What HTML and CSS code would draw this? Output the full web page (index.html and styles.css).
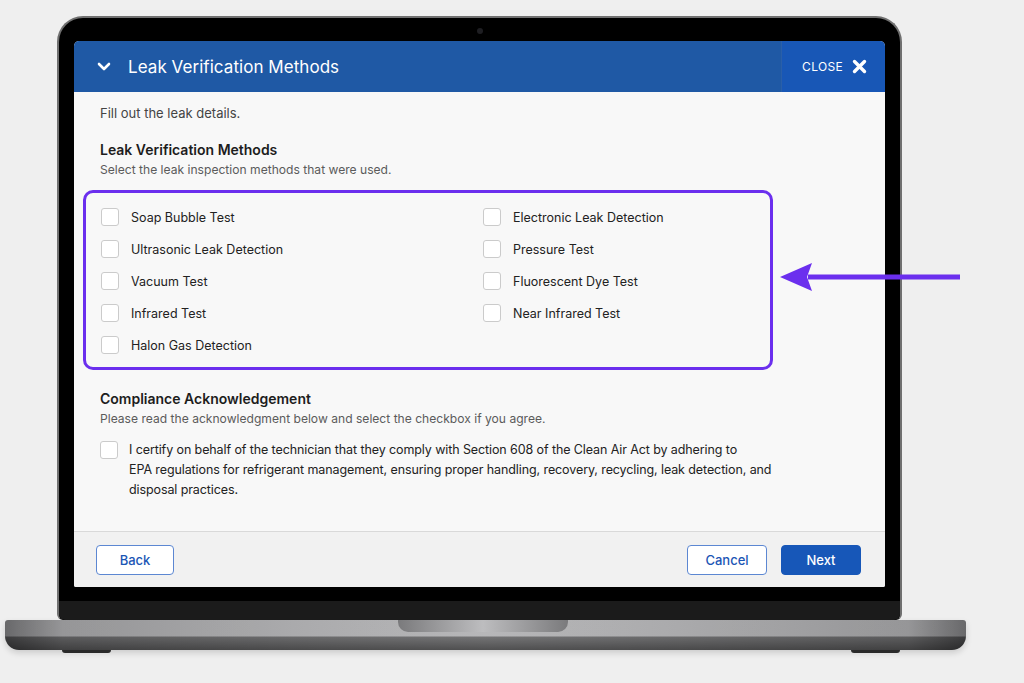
FILE: index.html
```html
<!DOCTYPE html>
<html lang="en">
<head>
  <meta charset="UTF-8">
  <meta name="viewport" content="width=device-width, initial-scale=1.0">
  <title>Leak Verification Methods</title>
  <link rel="stylesheet" href="styles.css">
</head>
<body>

  <div class="scene">
    <div class="laptop">
      <!-- Lid with screen -->
      <div class="lid">
        <div class="camera"></div>
        <div class="screen">
          <div class="modal-header">
            <div class="header-main">
              <svg class="chevron" width="14" height="9" viewBox="0 0 14 9">
                <path d="M2 2 L7 7 L12 2" fill="none" stroke="#fff" stroke-width="2.6" stroke-linecap="round" stroke-linejoin="round"/>
              </svg>
              <span class="header-title">Leak Verification Methods</span>
            </div>
            <div class="header-close">
              <span>CLOSE</span>
              <svg width="15" height="15" viewBox="0 0 15 15">
                <path d="M2.5 2.5 L12.5 12.5 M12.5 2.5 L2.5 12.5" stroke="#fff" stroke-width="3.4" stroke-linecap="round"/>
              </svg>
            </div>
          </div>

          <div class="modal-body">
            <p class="intro">Fill out the leak details.</p>

            <h2 class="section-title">Leak Verification Methods</h2>
            <p class="section-sub">Select the leak inspection methods that were used.</p>

            <div class="methods">
              <label class="option"><span class="box"></span>Soap Bubble Test</label>
              <label class="option"><span class="box"></span>Ultrasonic Leak Detection</label>
              <label class="option"><span class="box"></span>Vacuum Test</label>
              <label class="option"><span class="box"></span>Infrared Test</label>
              <label class="option"><span class="box"></span>Halon Gas Detection</label>
              <label class="option"><span class="box"></span>Electronic Leak Detection</label>
              <label class="option"><span class="box"></span>Pressure Test</label>
              <label class="option"><span class="box"></span>Fluorescent Dye Test</label>
              <label class="option"><span class="box"></span>Near Infrared Test</label>
            </div>

            <h2 class="section-title compliance">Compliance Acknowledgement</h2>
            <p class="section-sub">Please read the acknowledgment below and select the checkbox if you agree.</p>

            <label class="ack">
              <span class="box"></span>
              <span class="ack-text">I certify on behalf of the technician that they comply with Section 608 of the Clean Air Act by adhering to<br>EPA regulations for refrigerant management, ensuring proper handling, recovery, recycling, leak detection, and disposal practices.</span>
            </label>
          </div>

          <div class="modal-footer">
            <button class="btn btn-back">Back</button>
            <div class="footer-right">
              <button class="btn btn-cancel">Cancel</button>
              <button class="btn btn-next">Next</button>
            </div>
          </div>
        </div>
        <div class="chin"></div>
      </div>

      <!-- Base -->
      <div class="base">
        <div class="notch"></div>
      </div>
      <div class="feet">
        <span class="foot"></span>
        <span class="foot"></span>
      </div>
    </div>

    <!-- Annotation arrow -->
    <svg class="arrow" width="184" height="32" viewBox="0 0 184 32">
      <path d="M30 16 L182 16" stroke="#6b2fee" stroke-width="5"/>
      <path d="M2 16 L34 2 L29 16 L34 30 Z" fill="#6b2fee"/>
    </svg>
  </div>

</body>
</html>
```

FILE: styles.css
```css
/* General Styles */
* {
  box-sizing: border-box;
}

body {
  margin: 0;
  width: 1024px;
  height: 683px;
  overflow: hidden;
  background-color: #efefef;
  font-family: Inter, "Noto Sans", sans-serif;
  color: #222;
}

.scene {
  position: relative;
  padding-top: 16px;
}

.laptop {
  width: 961px;
  margin-left: 5px;
}

/* Lid */
.lid {
  width: 845px;
  height: 604px;
  margin-left: 52px;
  padding: 10px 15px 0;
  background-color: #000;
  border: 2px solid #707070;
  border-bottom: none;
  border-radius: 26px 26px 6px 6px;
  display: flex;
  flex-direction: column;
}

.camera {
  width: 6px;
  height: 6px;
  margin: 0 auto 7px;
  border-radius: 50%;
  background-color: #1e1e22;
}

.screen {
  height: 546px;
  background-color: #f8f8f8;
  border-radius: 5px 5px 2px 2px;
  overflow: hidden;
  display: flex;
  flex-direction: column;
}

.chin {
  flex: 1;
  background: linear-gradient(#000 0 14px, #1b1b1b 14px);
  margin: 0 -15px;
  border-radius: 0 0 6px 6px;
}

/* Header */
.modal-header {
  height: 51px;
  display: flex;
  color: #fff;
}

.header-main {
  flex: 1;
  display: flex;
  align-items: center;
  gap: 17px;
  padding-left: 23px;
  background-color: #1f59a5;
}

.header-title {
  font-size: 17px;
  letter-spacing: 0.05px;
}

.header-close {
  width: 104px;
  display: flex;
  align-items: center;
  justify-content: center;
  gap: 9px;
  padding-left: 2px;
  background-color: #1857b6;
  border-left: 1px solid #2a5fa8;
  font-size: 12px;
  letter-spacing: 0.3px;
}

/* Body */
.modal-body {
  flex: 1;
  padding: 12px 26px 0;
}

.intro {
  margin: 0;
  font-size: 13px;
  line-height: 18px;
  color: #444;
}

.section-title {
  margin: 18px 0 0;
  font-size: 14px;
  line-height: 20px;
  font-weight: 600;
  color: #1d1d1d;
}

.section-sub {
  margin: 1px 0 0;
  font-size: 12.1px;
  line-height: 18px;
  color: #5b5b5b;
}

.methods {
  width: 690px;
  height: 180px;
  margin: 11px 0 0 -17px;
  padding: 8px 15px 6px;
  border: 3px solid #6b2fee;
  border-radius: 10px;
  display: grid;
  grid-template-rows: repeat(5, 32px);
  grid-template-columns: 382px 1fr;
  grid-auto-flow: column;
}

.option {
  display: flex;
  align-items: center;
  gap: 12px;
  font-size: 12.5px;
  color: #222;
}

.box {
  width: 18px;
  height: 18px;
  flex: none;
  background-color: #fff;
  border: 1.5px solid #cbcbcb;
  border-radius: 3px;
}

.compliance {
  margin-top: 19px;
}

.ack {
  display: flex;
  align-items: flex-start;
  gap: 11px;
  margin-top: 12px;
}

.ack .box {
  margin-top: 1px;
}

.ack-text {
  width: 655px;
  font-size: 12.5px;
  line-height: 20px;
  letter-spacing: -0.1px;
  color: #222;
}

/* Footer */
.modal-footer {
  height: 56px;
  display: flex;
  align-items: center;
  justify-content: space-between;
  padding: 0 24px 0 22px;
  background-color: #f1f1f1;
  border-top: 1px solid #d9d9d9;
}

.footer-right {
  display: flex;
  gap: 14px;
}

.btn {
  height: 30px;
  border-radius: 4px;
  font-family: inherit;
  font-size: 13px;
  font-weight: 500;
  border: 1px solid #5c87d2;
  background-color: #fff;
  color: #1b56b5;
}

.btn-back {
  width: 78px;
}

.btn-cancel,
.btn-next {
  width: 80px;
}

.btn-next {
  background-color: #1757b8;
  border-color: #1757b8;
  color: #fff;
}

/* Base */
.base {
  height: 30px;
  border-radius: 3px 3px 14px 14px;
  background:
    linear-gradient(rgba(255, 255, 255, 0.08) 0 16px, rgba(0, 0, 0, 0.35) 17px, rgba(0, 0, 0, 0.55) 100%),
    linear-gradient(90deg, #5c5c5e 0%, #8d8d8f 6%, #a3a3a5 30%, #b1b1b3 50%, #a3a3a5 70%, #8d8d8f 94%, #5c5c5e 100%);
  box-shadow: 0 3px 6px rgba(0, 0, 0, 0.15);
  display: flex;
  justify-content: center;
}

.notch {
  width: 170px;
  height: 12px;
  margin-left: -6px;
  border-radius: 0 0 10px 10px;
  background: linear-gradient(90deg, #7a7a7c, #bdbdbf 50%, #7a7a7c);
}

.feet {
  display: flex;
  justify-content: space-between;
  padding: 0 66px 0 57px;
}

.foot {
  width: 49px;
  height: 3px;
  border-radius: 0 0 4px 4px;
  background-color: #2a2a2a;
}

/* Annotation */
.arrow {
  position: absolute;
  left: 778px;
  top: 261px;
}
```
